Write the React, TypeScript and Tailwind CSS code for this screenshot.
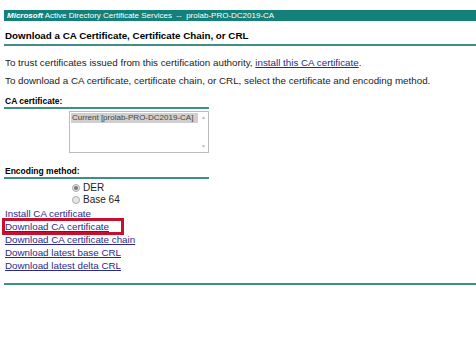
import React from 'react';

export default function App() {
    const links = [
        'Install CA certificate',
        'Download CA certificate',
        'Download CA certificate chain',
        'Download latest base CRL',
        'Download latest delta CRL',
    ];

    return (
        <div className="w-[476px] h-[357px] bg-white text-black overflow-hidden pt-[10px] pl-[4px]" style={{ fontFamily: '"Liberation Sans", Arial, sans-serif' }}>
            {/* HEADER BAR */}
            <div className="h-[11px] bg-[#138079] text-white text-[8px] leading-[11px] pl-[3px] whitespace-nowrap">
                <span className="font-bold italic">Microsoft</span> Active Directory Certificate Services &nbsp;--&nbsp; prolab-PRO-DC2019-CA
            </div>

            {/* TITLE */}
            <div className="mt-[9px] pl-[1px] pb-[2px] border-b-2 border-[#3f8f88] text-[9.8px] font-bold leading-[12px]">
                Download a CA Certificate, Certificate Chain, or CRL
            </div>

            <div className="pl-[1px] text-[9.8px] leading-[12px] text-[#222]">
                <p className="mt-[11px]">
                    To trust certificates issued from this certification authority, <span className="text-[#2a2a8a] underline">install this CA certificate</span>.
                </p>
                <p className="mt-[6px]">
                    To download a CA certificate, certificate chain, or CRL, select the certificate and encoding method.
                </p>
            </div>

            {/* CA CERTIFICATE */}
            <div className="mt-[9px] w-[205px] pl-[1px] border-b-2 border-[#3f8f88] text-[8.5px] font-bold leading-[10px] pb-[1px]">
                CA certificate:
            </div>
            <div className="mt-[2px] ml-[65px] w-[140px] h-[42px] border border-[#bbb] flex">
                <div className="flex-1 p-[1px]">
                    <div className="bg-[#cfcfcf] text-[#444] text-[8px] leading-[10px] pl-[1px] whitespace-nowrap">
                        Current [prolab-PRO-DC2019-CA]
                    </div>
                </div>
                <div className="w-[9px] flex flex-col justify-between items-center text-[#bbb] text-[5px] py-[2px]">
                    <span>▲</span>
                    <span>▼</span>
                </div>
            </div>

            {/* ENCODING METHOD */}
            <div className="mt-[13px] w-[205px] pl-[1px] border-b-2 border-[#3f8f88] text-[8.5px] font-bold leading-[10px] pb-[1px]">
                Encoding method:
            </div>
            <div className="ml-[68px] mt-[3px] text-[10px] leading-[12px] text-[#222]">
                <div className="flex items-center gap-[3px]">
                    <span className="w-[8px] h-[8px] rounded-full border border-[#aaa] bg-[#e6e6e6] flex items-center justify-center">
                        <span className="w-[4px] h-[4px] rounded-full bg-[#777]" />
                    </span>
                    DER
                </div>
                <div className="flex items-center gap-[3px]">
                    <span className="w-[8px] h-[8px] rounded-full border border-[#aaa] bg-[#e6e6e6]" />
                    Base 64
                </div>
            </div>

            {/* LINKS */}
            <div className="mt-[1px] pl-[1px] text-[9.8px] leading-[13px] text-[#2a2a8a]">
                {links.map((l, i) => (
                    <div key={l} className={i === 1 ? 'relative' : ''}>
                        <span className="underline">{l}</span>
                        {i === 1 && (
                            <div className="absolute left-[-3px] top-[-2px] w-[122px] h-[17px] border-[3px] border-[#c8102e]" />
                        )}
                    </div>
                ))}
            </div>

            <div className="mt-[11px] border-b-2 border-[#3f8f88]" />
        </div>
    );
}
